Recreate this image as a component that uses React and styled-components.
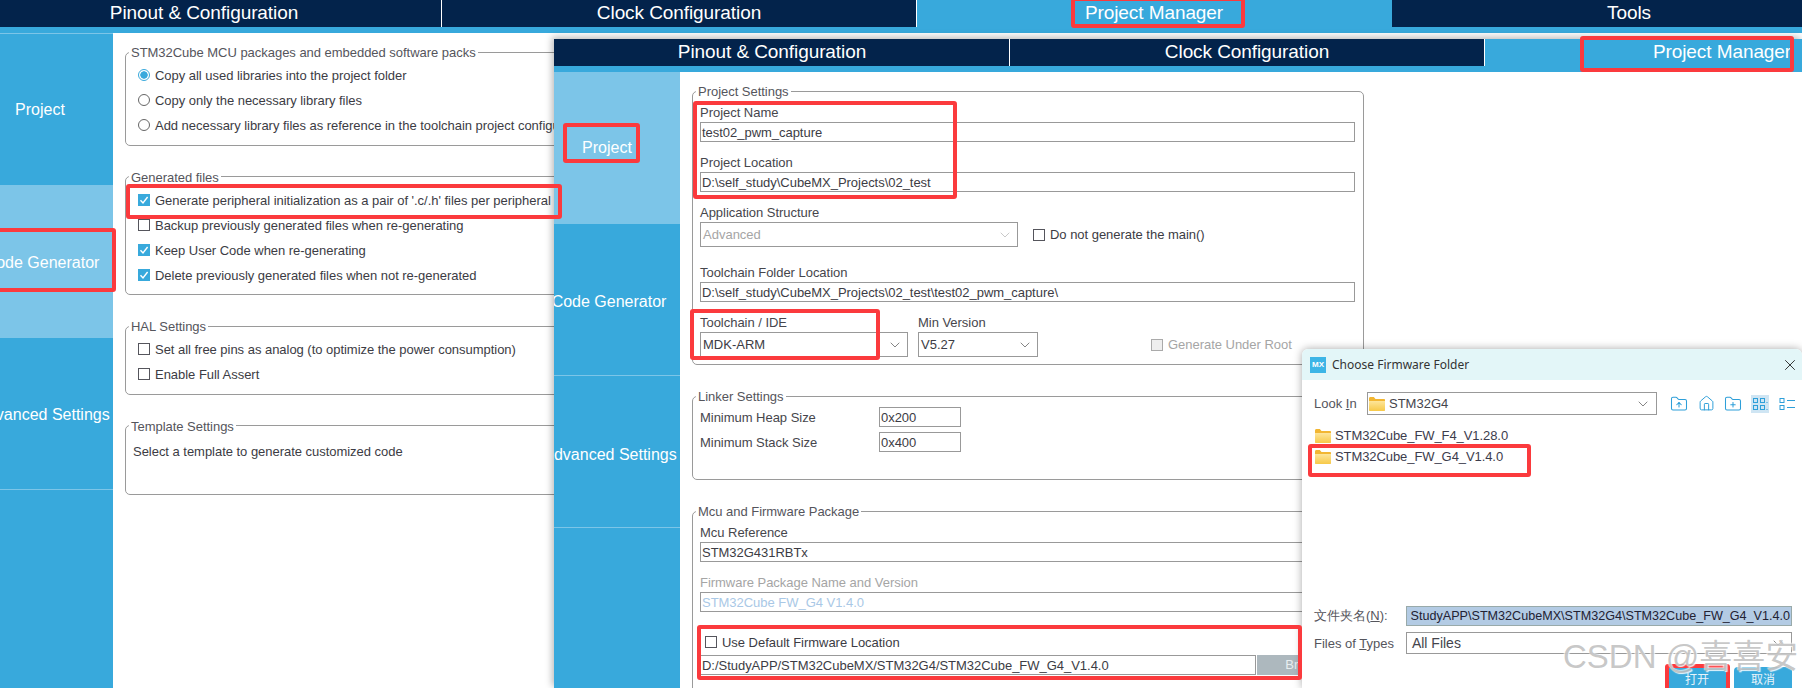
import React from 'react';
import styled, { createGlobalStyle } from 'styled-components';
import { ChevronDown, X, House, FolderUp, FolderPlus } from 'lucide-react';

const Global = createGlobalStyle`
  html, body { margin: 0; padding: 0; width: 1802px; height: 688px; overflow: hidden; background: #fff; }
  * { box-sizing: border-box; }
  body { font-family: "Liberation Sans", Arial, sans-serif; color: #3c3c44; }
`;

const Stage = styled.div`position: relative; width: 1802px; height: 688px; overflow: hidden; background: #fff;`;
const Window = styled.div`display: flex; flex-direction: column; width: 100%; height: 100%; overflow: hidden; background: #fff;`;
const Front = styled.div`
  position: absolute; left: 554px; top: 39px; width: 1248px; height: 649px;
  box-shadow: -2px -2px 7px rgba(0,0,0,.28);
`;
const TabBar = styled.div`
  display: flex; flex: none; height: 33px; padding-bottom: 6px; background: #38a9dc;
  margin-left: ${p => p.$shift}px; width: 2000px;
`;
const Tab = styled.div`
  flex: none; width: 475px; height: 27px; padding-bottom: 2px; display: flex; align-items: center; justify-content: center;
  font-size: 19px; letter-spacing: -.08px; color: #fff; background: ${p => p.$active ? '#38a9dc' : '#03234b'};
  border-right: 1px solid ${p => p.$active ? '#38a9dc' : '#fff'};
`;
const Main = styled.div`display: flex; flex: 1; min-height: 0;`;
const Side = styled.div`
  flex: none; width: ${p => p.$w}px; background: #38a9dc; overflow: hidden;
  border-top: ${p => p.$top}px solid #7cc5e8;
`;
const SideItem = styled.div`
  width: 140px; height: 152px; margin-left: ${p => p.$w - 140}px; display: flex; align-items: center; justify-content: center;
  color: #fff; font-size: 16px; padding-right: ${p => p.$pr || 0}px; padding-top: ${p => p.$pt || 0}px;
  background: ${p => p.$active ? '#7cc5e8' : '#38a9dc'};
  border-bottom: 1px solid #7cc5e8;
`;
const BackContent = styled.div`flex: 1; display: flex; flex-direction: column; gap: 23px; padding: 11px 0 0 12px; min-width: 0;`;
const FrontContent = styled.div`flex: 1; display: flex; flex-direction: column; gap: 23px; padding: 11px 0 0 12px; min-width: 0;`;
const Group = styled.fieldset`
  margin: 0; padding: 2.5px 0 7px 12px; min-width: 0; flex: none;
  width: ${p => p.$w || 700}px; height: ${p => p.$h ? p.$h + 'px' : 'auto'};
  border: 1px solid #9a9a9a; border-radius: 5px;
`;
const GroupFront = styled(Group)`padding: 3px 0 7px 7px;`;
const Legend = styled.legend`
  margin-left: ${p => p.$ml}px; padding: 0 2px; font-size: 13px; letter-spacing: -.03px; line-height: 18px; height: 16px; color: #55555c;
`;
const Row = styled.div`display: flex; align-items: center; gap: 5px; height: 25px; font-size: 13px; letter-spacing: -.03px; white-space: nowrap;`;
const RowText = styled.span`position: relative; top: .5px;`;
const Radio = styled.span`
  flex: none; width: 12px; height: 12px; border-radius: 50%; border: 1px solid ${p => p.$on ? '#38a9dc' : '#666'};
  background: ${p => p.$on ? 'radial-gradient(circle, #38a9dc 0 3.4px, #fff 4px)' : '#fff'};
`;
const Box = styled.span`
  flex: none; width: 12px; height: 12px; display: inline-flex; align-items: center; justify-content: center;
  border: 1px solid ${p => p.$on ? '#38a9dc' : p.$off ? '#aaa' : '#55555c'}; background: ${p => p.$on ? '#38a9dc' : p.$off ? '#eee' : '#fff'};
`;
const Note = styled.div`font-size: 13px; letter-spacing: -.03px; line-height: 16px; padding: 8px 0 0 0; margin-left: -5px;`;
const Field = styled.div`display: flex; flex-direction: column; margin-bottom: ${p => p.$mb ?? 10}px; width: ${p => p.$w ? p.$w + 'px' : 'auto'};`;
const Label = styled.div`height: 20px; line-height: 22px; font-size: 13px; letter-spacing: -.03px; margin-top: ${p => p.$mt || 0}px; color: ${p => p.$dim ? '#a5a5a5' : '#46464c'}; white-space: nowrap;`;
const Input = styled.div`
  width: ${p => p.$w || 655}px; height: 20px; line-height: 19px; padding-left: 1px; font-size: 13px; letter-spacing: -.03px; white-space: nowrap;
  border: 1px solid #999; background: #fff; color: ${p => p.$dim ? '#a9c8e6' : '#3c3c44'}; flex: none;
`;
const Select = styled.div`
  display: flex; align-items: center; justify-content: space-between; width: ${p => p.$w}px; height: 25px; padding: 0 4px 0 2px;
  border: 1px solid #999; background: #fff; font-size: 13px; color: ${p => p.$dim ? '#a5a5a5' : '#3c3c44'};
`;
const Inline = styled.div`display: flex; align-items: ${p => p.$a || 'flex-end'}; gap: ${p => p.$g || 10}px;`;
const ToolRow = styled.div`display: flex; align-items: center; height: 25px; gap: 5px; font-size: 13px; letter-spacing: -.03px; white-space: nowrap; color: ${p => p.$dim ? '#a5a5a5' : '#3c3c44'}; margin-left: ${p => p.$ml || 0}px;`;
const LinkerRow = styled.div`display: flex; align-items: center; height: 20px; margin-bottom: 5px; font-size: 13px; letter-spacing: -.03px;`;
const LinkerName = styled.div`width: 179px; color: #46464c;`;
const FirmwareCheck = styled.div`display: flex; align-items: center; gap: 5px; height: 20px; margin: 20px 0 3px 5px; font-size: 13px; letter-spacing: -.03px;`;
const PathRow = styled.div`display: flex; gap: 1px;`;
const Browse = styled.div`width: 100px; height: 20px; background: #adb8be; color: #e8eef0; font-size: 13px; line-height: 20px; text-align: center; flex: none;`;

const Dialog = styled.div`
  position: absolute; left: 1302px; top: 349px; width: 500px; height: 339px; background: #fff;
  display: flex; flex-direction: column; border-radius: 6px 6px 0 0; box-shadow: 0 0 9px rgba(0,0,0,.35);
  font-size: 13px;
`;
const TitleBar = styled.div`
  flex: none; height: 31px; display: flex; align-items: center; gap: 6px; padding: 0 0 0 8px; background: #e3f6f8; border-radius: 6px 6px 0 0;
  font-family: "Noto Sans", sans-serif; font-size: 12px; color: #333;
`;
const Mx = styled.span`width: 16px; height: 16px; background: #3db5e6; color: #fff; font: bold 8px/16px "Liberation Sans", sans-serif; text-align: center;`;
const Close = styled.span`margin-left: auto; margin-right: 3px; display: flex; color: #222;`;
const LookRow = styled.div`display: flex; align-items: center; margin: 12px 0 0 12px; height: 23px;`;
const DLabel = styled.div`width: 53px; color: #55555c; font-size: 13px; white-space: nowrap; flex: none; u { text-decoration: underline; }`;
const DCombo = styled.div`
  display: flex; align-items: center; width: ${p => p.$w}px; height: ${p => p.$h}px; border: 1px solid #999; padding: 0 5px 0 1px; gap: 4px;
  font-size: ${p => p.$fs}px; color: #44444c;
`;
const ComboEnd = styled.span`margin-left: auto; display: flex; color: #777;`;
const Tools = styled.div`display: flex; align-items: center; margin-left: 13px; color: #2e9fd9; gap: 9px;`;
const ToolBtn = styled.span`display: flex; align-items: center; justify-content: center; width: 18px; height: 18px; background: ${p => p.$on ? '#cfe5f3' : 'transparent'};`;
const FileList = styled.div`display: flex; flex-direction: column; margin: 10px 0 0 13px;`;
const FileRow = styled.div`display: flex; align-items: center; gap: 4px; height: 21px; font-size: 13px; letter-spacing: -.08px; color: #3c3c4c;`;
const FormRow = styled.div`display: flex; align-items: center; margin: 0 0 ${p => p.$mb}px 12px; height: ${p => p.$h}px;`;
const FormName = styled.div`width: 92px; flex: none; font-size: 13px; color: #55555c; white-space: nowrap; u { text-decoration: underline; }`;
const Push = styled.div`flex: 1;`;
const Selected = styled.div`
  width: 386px; height: 20px; background: #b3cbe4; border: 1px solid #9aa; display: flex; justify-content: flex-end; white-space: nowrap;
  font-size: 12.6px; line-height: 18px; padding: 0 1px; color: #223;
`;
const Buttons = styled.div`display: flex; justify-content: flex-end; gap: 7px; padding-right: 10px; margin-top: 13px;`;
const DlgBtn = styled.div`
  width: ${p => p.$w}px; height: 21px; background: #38a9dc; color: #e8f4fa; font-size: 12px; line-height: 24px; text-align: center;
  font-family: "Noto Sans CJK SC", sans-serif; border-radius: 4px 4px 0 0;
`;

const Mark = styled.div`
  position: absolute; left: ${p => p.$x}px; top: ${p => p.$y}px; width: ${p => p.$w}px; height: ${p => p.$h}px;
  border: 4px solid #fb3a3d; border-radius: 3px; pointer-events: none;
`;
const Watermark = styled.div`
  position: absolute; left: 1563px; top: 637px; font-size: 33px; line-height: 40px; white-space: nowrap; color: rgba(175,175,175,.7);
  font-family: "Liberation Sans", "Noto Sans CJK SC", sans-serif; text-shadow: 1px 1px 1px rgba(255,255,255,.9), -1px -1px 1px rgba(255,255,255,.7);
`;

const Tick = () => (
  <svg width="10" height="10" viewBox="0 0 10 10" fill="none"><path d="M1.5 5.2 4 8l4.6-6" stroke="#fff" strokeWidth="1.4" /></svg>
);
const Chev = ({ c = '#666' }) => <ChevronDown size={16} strokeWidth={1.2} color={c} />;
const Folder = () => (
  <svg width="16" height="14" viewBox="0 0 16 14">
    <defs><linearGradient id="fg" x1="0" y1="0" x2="0" y2="1"><stop offset="0" stopColor="#fde59a" /><stop offset="1" stopColor="#f7c948" /></linearGradient></defs>
    <path d="M0 1.5C0 .7.6 0 1.4 0h3.4l1.7 2H15c.6 0 1 .4 1 1v9.5c0 .8-.6 1.5-1.4 1.5H1.4C.6 14 0 13.3 0 12.5z" fill="#f2b632" />
    <path d="M0 4h16v8.5c0 .8-.6 1.5-1.4 1.5H1.4C.6 14 0 13.3 0 12.5z" fill="url(#fg)" />
  </svg>
);
const GridIcon = () => (
  <svg width="16" height="14" viewBox="0 0 16 14" fill="none" stroke="#2e9fd9"><rect x="1.5" y="1.5" width="4" height="4" /><rect x="8.5" y="1.5" width="4" height="4" /><rect x="1.5" y="8.5" width="4" height="4" /><rect x="8.5" y="8.5" width="4" height="4" /><path d="M14.5 5.5h1M14.5 12.5h1" /></svg>
);
const ListIcon = () => (
  <svg width="16" height="14" viewBox="0 0 16 14" fill="none" stroke="#2e9fd9"><rect x="1" y="1.5" width="4" height="4" /><rect x="1" y="8.5" width="4" height="4" /><path d="M8 3.5h8M8 10.5h8" /></svg>
);

export default function App() {
  return (
    <Stage>
      <Global />
      <Window>
        <TabBar $shift={-33}>
          <Tab>Pinout &amp; Configuration</Tab>
          <Tab>Clock Configuration</Tab>
          <Tab $active>Project Manager</Tab>
          <Tab>Tools</Tab>
        </TabBar>
        <Main>
          <Side $w={113} $top={1}>
            <SideItem $w={113} $pr={6}>Project</SideItem>
            <SideItem $w={113} $pr={2} $pt={3} $active>Code Generator</SideItem>
            <SideItem $w={113} $pt={3}>Advanced Settings</SideItem>
          </Side>
          <BackContent>
            <Group>
              <Legend $ml={-9}>STM32Cube MCU packages and embedded software packs</Legend>
              <Row><Radio $on /><RowText>Copy all used libraries into the project folder</RowText></Row>
              <Row><Radio /><RowText>Copy only the necessary library files</RowText></Row>
              <Row><Radio /><RowText>Add necessary library files as reference in the toolchain project configuration file</RowText></Row>
            </Group>
            <Group>
              <Legend $ml={-9}>Generated files</Legend>
              <Row><Box $on><Tick /></Box><RowText>Generate peripheral initialization as a pair of '.c/.h' files per peripheral</RowText></Row>
              <Row><Box /><RowText>Backup previously generated files when re-generating</RowText></Row>
              <Row><Box $on><Tick /></Box><RowText>Keep User Code when re-generating</RowText></Row>
              <Row><Box $on><Tick /></Box><RowText>Delete previously generated files when not re-generated</RowText></Row>
            </Group>
            <Group>
              <Legend $ml={-9}>HAL Settings</Legend>
              <Row><Box /><RowText>Set all free pins as analog (to optimize the power consumption)</RowText></Row>
              <Row><Box /><RowText>Enable Full Assert</RowText></Row>
            </Group>
            <Group $h={77}>
              <Legend $ml={-9}>Template Settings</Legend>
              <Note>Select a template to generate customized code</Note>
            </Group>
          </BackContent>
        </Main>
      </Window>

      <Front>
        <Window>
          <TabBar $shift={-19}>
            <Tab>Pinout &amp; Configuration</Tab>
            <Tab>Clock Configuration</Tab>
            <Tab $active>Project Manager</Tab>
          </TabBar>
          <Main>
            <Side $w={126} $top={0}>
              <SideItem $w={126} $pr={6} $active>Project</SideItem>
              <SideItem $w={126} $pr={2} $pt={5}>Code Generator</SideItem>
              <SideItem $w={126} $pt={6}>Advanced Settings</SideItem>
            </Side>
            <FrontContent>
              <GroupFront $w={672}>
                <Legend $ml={-4}>Project Settings</Legend>
                <Field><Label>Project Name</Label><Input>test02_pwm_capture</Input></Field>
                <Field><Label>Project Location</Label><Input>D:\self_study\CubeMX_Projects\02_test</Input></Field>
                <Inline $a="flex-end" $g={15}>
                  <Field $mb={0}><Label>Application Structure</Label><Select $w={318} $dim>Advanced<Chev c="#bbb" /></Select></Field>
                  <ToolRow><Box />Do not generate the main()</ToolRow>
                </Inline>
                <Field $mb={10}><Label $mt={15}>Toolchain Folder Location</Label><Input>D:\self_study\CubeMX_Projects\02_test\test02_pwm_capture\</Input></Field>
                <Inline>
                  <Field $mb={0}><Label>Toolchain / IDE</Label><Select $w={208}>MDK-ARM<Chev /></Select></Field>
                  <Field $mb={0}><Label>Min Version</Label><Select $w={120}>V5.27<Chev /></Select></Field>
                  <ToolRow $dim $ml={103}><Box $off />Generate Under Root</ToolRow>
                </Inline>
              </GroupFront>
              <GroupFront $w={672} $h={92}>
                <Legend $ml={-4}>Linker Settings</Legend>
                <LinkerRow><LinkerName>Minimum Heap Size</LinkerName><Input $w={82}>0x200</Input></LinkerRow>
                <LinkerRow><LinkerName>Minimum Stack Size</LinkerName><Input $w={82}>0x400</Input></LinkerRow>
              </GroupFront>
              <GroupFront $w={672} $h={300}>
                <Legend $ml={-4}>Mcu and Firmware Package</Legend>
                <Field><Label>Mcu Reference</Label><Input>STM32G431RBTx</Input></Field>
                <Field $mb={0}><Label $dim>Firmware Package Name and Version</Label><Input $dim>STM32Cube FW_G4 V1.4.0</Input></Field>
                <FirmwareCheck><Box />Use Default Firmware Location</FirmwareCheck>
                <PathRow><Input $w={556}>D:/StudyAPP/STM32CubeMX/STM32G4/STM32Cube_FW_G4_V1.4.0</Input><Browse>Browse</Browse></PathRow>
              </GroupFront>
            </FrontContent>
          </Main>
        </Window>
      </Front>

      <Dialog>
        <TitleBar><Mx>MX</Mx>Choose Firmware Folder<Close><X size={18} strokeWidth={1.2} /></Close></TitleBar>
        <LookRow>
          <DLabel>Look <u>I</u>n</DLabel>
          <DCombo $w={290} $h={23} $fs={13}><Folder />STM32G4<ComboEnd><Chev /></ComboEnd></DCombo>
          <Tools>
            <ToolBtn><FolderUp size={18} strokeWidth={1.4} /></ToolBtn>
            <ToolBtn><House size={17} strokeWidth={1.4} /></ToolBtn>
            <ToolBtn><FolderPlus size={18} strokeWidth={1.4} /></ToolBtn>
            <ToolBtn $on><GridIcon /></ToolBtn>
            <ToolBtn><ListIcon /></ToolBtn>
          </Tools>
        </LookRow>
        <FileList>
          <FileRow><Folder />STM32Cube_FW_F4_V1.28.0</FileRow>
          <FileRow><Folder />STM32Cube_FW_G4_V1.4.0</FileRow>
        </FileList>
        <Push />
        <FormRow $h={20} $mb={6}><FormName>文件夹名(<u>N</u>):</FormName><Selected>StudyAPP\STM32CubeMX\STM32G4\STM32Cube_FW_G4_V1.4.0</Selected></FormRow>
        <FormRow $h={22} $mb={0}><FormName>Files of <u>T</u>ypes</FormName><DCombo $w={386} $h={22} $fs={14}>&nbsp;All Files<ComboEnd><Chev /></ComboEnd></DCombo></FormRow>
        <Buttons><DlgBtn $w={60}>打开</DlgBtn><DlgBtn $w={58}>取消</DlgBtn></Buttons>
      </Dialog>

      <Mark $x={1071} $y={-3} $w={174} $h={31} />
      <Mark $x={-6} $y={228} $w={122} $h={64} />
      <Mark $x={126} $y={184} $w={436} $h={35} />
      <Mark $x={1580} $y={36} $w={214} $h={36} />
      <Mark $x={563} $y={123} $w={77} $h={40} />
      <Mark $x={693} $y={101} $w={264} $h={98} />
      <Mark $x={690} $y={309} $w={190} $h={51} />
      <Mark $x={697} $y={625} $w={605} $h={55} />
      <Mark $x={1308} $y={444} $w={223} $h={33} />
      <Mark $x={1665} $y={664} $w={65} $h={30} />
      <Watermark>CSDN @喜喜安</Watermark>
    </Stage>
  );
}
